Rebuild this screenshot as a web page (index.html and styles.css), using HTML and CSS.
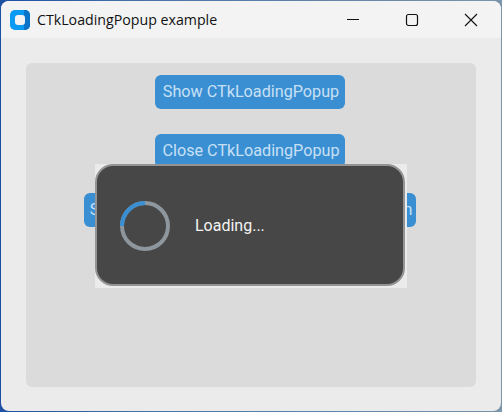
FILE: index.html
```html
<!DOCTYPE html>
<html lang="en">
<head>
  <meta charset="UTF-8">
  <title>CTkLoadingPopup example</title>
  <link rel="stylesheet" href="styles.css">
</head>
<body>
  <div class="window">
    <header class="titlebar">
      <svg class="app-icon" width="20" height="20" viewBox="0 0 20 20">
        <rect width="20" height="20" rx="5" fill="#0a9af3"/>
        <path d="M14 0h1a5 5 0 0 1 5 5v10a5 5 0 0 1-5 5h-1z" fill="#0b74c9"/>
        <rect x="5" y="5" width="10" height="10" rx="3" fill="#f3f3f3"/>
      </svg>
      <span class="title">CTkLoadingPopup example</span>
      <div class="window-controls">
        <svg width="14" height="14" viewBox="0 0 14 14"><path d="M1 6.5h12" stroke="#111" fill="none"/></svg>
        <svg width="14" height="14" viewBox="0 0 14 14"><rect x="1.5" y="1.5" width="11" height="11" rx="2" stroke="#111" stroke-width="1.2" fill="none"/></svg>
        <svg width="14" height="14" viewBox="0 0 14 14"><path d="M1 1l12 12M13 1L1 13" stroke="#111" stroke-width="1.1" fill="none"/></svg>
      </div>
    </header>
    <main class="content">
      <section class="frame">
        <button class="btn">Show CTkLoadingPopup</button>
        <button class="btn">Close CTkLoadingPopup</button>
        <button class="btn wide">Show CTkLoadingPopup and close on button</button>
      </section>
    </main>
    <div class="popup">
      <div class="popup-inner">
        <svg class="spinner" width="50" height="50" viewBox="0 0 50 50">
          <circle cx="25" cy="25" r="23" fill="none" stroke="#8e979e" stroke-width="4"/>
          <path d="M25 2A23 23 0 0 0 2 25" fill="none" stroke="#3a8fd3" stroke-width="4"/>
        </svg>
        <span class="popup-text">Loading...</span>
      </div>
    </div>
  </div>
</body>
</html>
```

FILE: styles.css
```css
* {
  box-sizing: border-box;
}
html, body {
  height: 100%;
}
body {
  margin: 0;
  padding: 1px;
  overflow: hidden;
  background: linear-gradient(90deg, #1d4fa3 0%, #4a74a8 30%, #7b94a9 100%);
}
.window {
  position: relative;
  height: 410px;
  display: flex;
  flex-direction: column;
  background: #ebebeb;
  border-radius: 8px;
  overflow: hidden;
}
.titlebar {
  display: flex;
  align-items: center;
  height: 37px;
  padding-left: 9px;
  background: #f3f3f3;
}
.app-icon {
  margin-right: 7px;
}
.title {
  font: 14.2px "Open Sans", sans-serif;
  color: #111;
}
.window-controls {
  display: flex;
  gap: 45px;
  margin-left: auto;
  margin-right: 23px;
}
.content {
  flex: 1;
  padding: 25px 25px 24px;
}
.frame {
  height: 100%;
  display: flex;
  flex-direction: column;
  align-items: center;
  gap: 25px;
  padding: 12px 2px 0 0;
  background: #dbdbdb;
  border-radius: 6px;
}
.btn {
  width: 190px;
  height: 34px;
  padding: 0 0 2px 2px;
  border: none;
  border-radius: 6px;
  background: #3a8fd3;
  color: #c8e0f4;
  font: 16.2px Roboto, sans-serif;
  white-space: nowrap;
}
.btn.wide {
  width: 332px;
}
.popup {
  position: absolute;
  left: 94px;
  top: 163px;
  width: 312px;
  height: 124px;
  padding: 0 2px 2px 0;
  background: #ebebeb;
}
.popup-inner {
  display: flex;
  align-items: center;
  height: 100%;
  padding-left: 23px;
  background: #474747;
  border: 2px solid #949494;
  border-radius: 18px;
}
.spinner {
  margin-top: 2px;
}
.popup-text {
  margin-left: 25px;
  font: 16px Roboto, sans-serif;
  color: #f4f4f4;
}
```
